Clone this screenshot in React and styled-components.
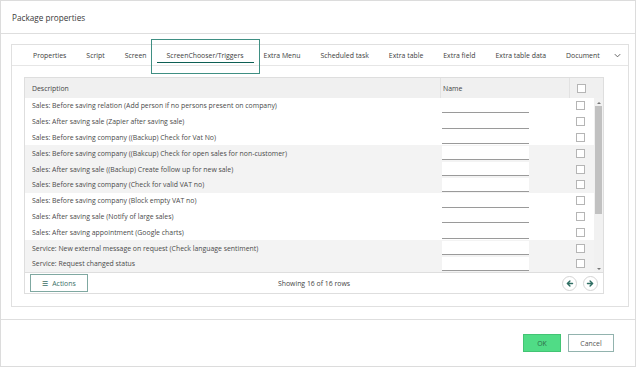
import React from 'react'
import styled, { createGlobalStyle } from 'styled-components'

const GlobalStyle = createGlobalStyle`
  * { box-sizing: border-box; }
  body {
    margin: 0;
    background: #fff;
    font-family: "Open Sans", "Noto Sans", sans-serif;
    color: #444;
  }
`

const Dialog = styled.div`
  width: 636px;
  height: 367px;
  border: 1px solid #dcdcdc;
  display: flex;
  flex-direction: column;
`

const Header = styled.div`
  height: 33px;
  padding-left: 11px;
  display: flex;
  align-items: center;
  border-bottom: 1px solid #dedede;
  font-size: 8.2px;
  color: #3a3a3a;
`

const Body = styled.div`
  height: 286px;
  padding: 10px 6px 12px 10px;
  border-bottom: 1px solid #dedede;
`

const Panel = styled.div`
  height: 100%;
  border: 1px solid #e0e0e0;
  display: flex;
  flex-direction: column;
`

const TabBar = styled.div`
  height: 21px;
  display: flex;
  align-items: center;
  padding-left: 11px;
  border-bottom: 1px solid #e6e6e6;
`

const Tab = styled.div`
  position: relative;
  padding: 0 10px;
  font-size: 6.9px;
  color: #3c3c3c;
  white-space: nowrap;
  line-height: 21px;

  ${p => p.$active && `
    &::before {
      content: '';
      position: absolute;
      left: -6px;
      right: -6px;
      top: -6px;
      bottom: -8px;
      border: 1px solid #3f8f83;
      background: transparent;
    }
    &::after {
      content: '';
      position: absolute;
      left: 0;
      right: 0;
      bottom: 3px;
      height: 1px;
      background: #0d5f54;
    }
  `}
`

const Chevron = styled.svg`
  margin-left: 3px;
`

const TableWrap = styled.div`
  margin: 11px 24px 0 12px;
  border: 1px solid #dedede;
  display: flex;
  flex-direction: column;
`

const HeadRow = styled.div`
  height: 20px;
  display: grid;
  grid-template-columns: 415px 129px 1fr;
  background: #f0f0f0;
  font-size: 6.9px;
  color: #444;
`

const HeadCell = styled.div`
  display: flex;
  align-items: center;
  padding-left: ${p => p.$pad ?? 7}px;
  border-left: ${p => (p.$divider ? '1px solid #e2e2e2' : 'none')};
`

const RowsArea = styled.div`
  display: flex;
  height: 174px;
`

const Rows = styled.div`
  flex: 1;
`

const Row = styled.div`
  height: 15.8px;
  display: grid;
  grid-template-columns: 416px 128px 1fr;
  align-items: center;
  background: ${p => (p.$shade ? '#f3f3f3' : '#fff')};
  font-size: 6.9px;
  color: #4a4a4a;
`

const DescCell = styled.div`
  padding-left: 7px;
  white-space: nowrap;
  overflow: hidden;
`

const NameInput = styled.div`
  width: 87px;
  height: 14px;
  margin-left: 1px;
  background: #fff;
  border-bottom: 1px solid #9a9a9a;
  align-self: end;
  margin-bottom: 1px;
`

const Check = styled.span`
  display: block;
  width: 9px;
  height: 9px;
  border: 1px solid #b5b5b5;
  background: #fff;
  margin-left: ${p => p.$ml ?? 7}px;
`

const Scrollbar = styled.div`
  width: 9px;
  background: #f1f1f1;
  display: flex;
  flex-direction: column;
  align-items: center;
  padding-top: 2px;
`

const Arrow = styled.div`
  width: 0;
  height: 0;
  border-left: 2px solid transparent;
  border-right: 2px solid transparent;
  ${p => (p.$down ? 'border-top: 2px solid #777;' : 'border-bottom: 2px solid #777;')}
  margin: 2px 0;
`

const Thumb = styled.div`
  width: 7px;
  height: 108px;
  background: #c1c1c1;
  margin-bottom: auto;
`

const Footer = styled.div`
  height: 21px;
  border-top: 1px solid #dedede;
  display: flex;
  align-items: center;
  padding: 0 5px;
  font-size: 6.9px;
  color: #444;
`

const ActionsButton = styled.button`
  width: 58px;
  height: 18px;
  border: 1px solid #7fa8a1;
  background: #fff;
  color: #3b6e66;
  font-family: inherit;
  font-size: 6.9px;
  display: flex;
  align-items: center;
  justify-content: center;
  gap: 4px;
  padding: 0;
`

const Showing = styled.div`
  flex: 1;
  text-align: center;
  padding-right: 22px;
`

const Pager = styled.div`
  display: flex;
  gap: 6px;
`

const PageButton = styled.div`
  width: 15px;
  height: 15px;
  border-radius: 50%;
  border: 1px solid #d4d4d4;
  display: flex;
  align-items: center;
  justify-content: center;
`

const Actions = styled.div`
  flex: 1;
  display: flex;
  justify-content: flex-end;
  align-items: flex-start;
  padding: 14px 21px 0 0;
  gap: 7px;
`

const DialogButton = styled.button`
  height: 18px;
  width: ${p => p.$w}px;
  font-family: inherit;
  font-size: 6.9px;
  padding: 0;
  background: ${p => (p.$primary ? '#50dc86' : '#fff')};
  color: ${p => (p.$primary ? '#2d6b48' : '#555')};
  border: 1px solid ${p => (p.$primary ? '#43c474' : '#92b3ae')};
`

const tabs = [
  'Properties',
  'Script',
  'Screen',
  'ScreenChooser/Triggers',
  'Extra Menu',
  'Scheduled task',
  'Extra table',
  'Extra field',
  'Extra table data',
  'Document',
]

const rows = [
  'Sales: Before saving relation (Add person if no persons present on company)',
  'Sales: After saving sale (Zapier after saving sale)',
  'Sales: Before saving company ((Backup) Check for Vat No)',
  'Sales: Before saving company ((Bakcup) Check for open sales for non-customer)',
  'Sales: After saving sale ((Backup) Create follow up for new sale)',
  'Sales: Before saving company (Check for valid VAT no)',
  'Sales: Before saving company (Block empty VAT no)',
  'Sales: After saving sale (Notify of large sales)',
  'Sales: After saving appointment (Google charts)',
  'Service: New external message on request (Check language sentiment)',
  'Service: Request changed status',
]

function ArrowIcon({ dir }) {
  const d = dir === 'left' ? 'M8 4.5 L5 7.5 L8 10.5 M5 7.5 H11' : 'M7 4.5 L10 7.5 L7 10.5 M10 7.5 H4'
  return (
    <svg width="13" height="13" viewBox="0 0 15 15">
      <path d={d} fill="none" stroke="#2f6e63" strokeWidth="1.6" strokeLinecap="round" strokeLinejoin="round" />
    </svg>
  )
}

export default function App() {
  return (
    <>
      <GlobalStyle />
      <Dialog>
        <Header>Package properties</Header>
        <Body>
          <Panel>
            <TabBar>
              {tabs.map(t => (
                <Tab key={t} $active={t === 'ScreenChooser/Triggers'}>{t}</Tab>
              ))}
              <Chevron width="9" height="9" viewBox="0 0 10 10">
                <path d="M2 3.5 L5 6.5 L8 3.5" fill="none" stroke="#555" strokeWidth="1" />
              </Chevron>
            </TabBar>

            <TableWrap>
              <HeadRow>
                <HeadCell>Description</HeadCell>
                <HeadCell $divider $pad={2}>Name</HeadCell>
                <HeadCell $divider $pad={0}><Check /></HeadCell>
              </HeadRow>
              <RowsArea>
                <Rows>
                  {rows.map((r, i) => (
                    <Row key={r} $shade={Math.floor(i / 3) % 2 === 1}>
                      <DescCell>{r}</DescCell>
                      <NameInput />
                      <Check $ml={7} />
                    </Row>
                  ))}
                </Rows>
                <Scrollbar>
                  <Arrow />
                  <Thumb />
                  <Arrow $down />
                </Scrollbar>
              </RowsArea>
              <Footer>
                <ActionsButton>
                  <span>☰</span> Actions
                </ActionsButton>
                <Showing>Showing 16 of 16 rows</Showing>
                <Pager>
                  <PageButton><ArrowIcon dir="left" /></PageButton>
                  <PageButton><ArrowIcon dir="right" /></PageButton>
                </Pager>
              </Footer>
            </TableWrap>
          </Panel>
        </Body>
        <Actions>
          <DialogButton $primary $w={38}>OK</DialogButton>
          <DialogButton $w={46}>Cancel</DialogButton>
        </Actions>
      </Dialog>
    </>
  )
}
